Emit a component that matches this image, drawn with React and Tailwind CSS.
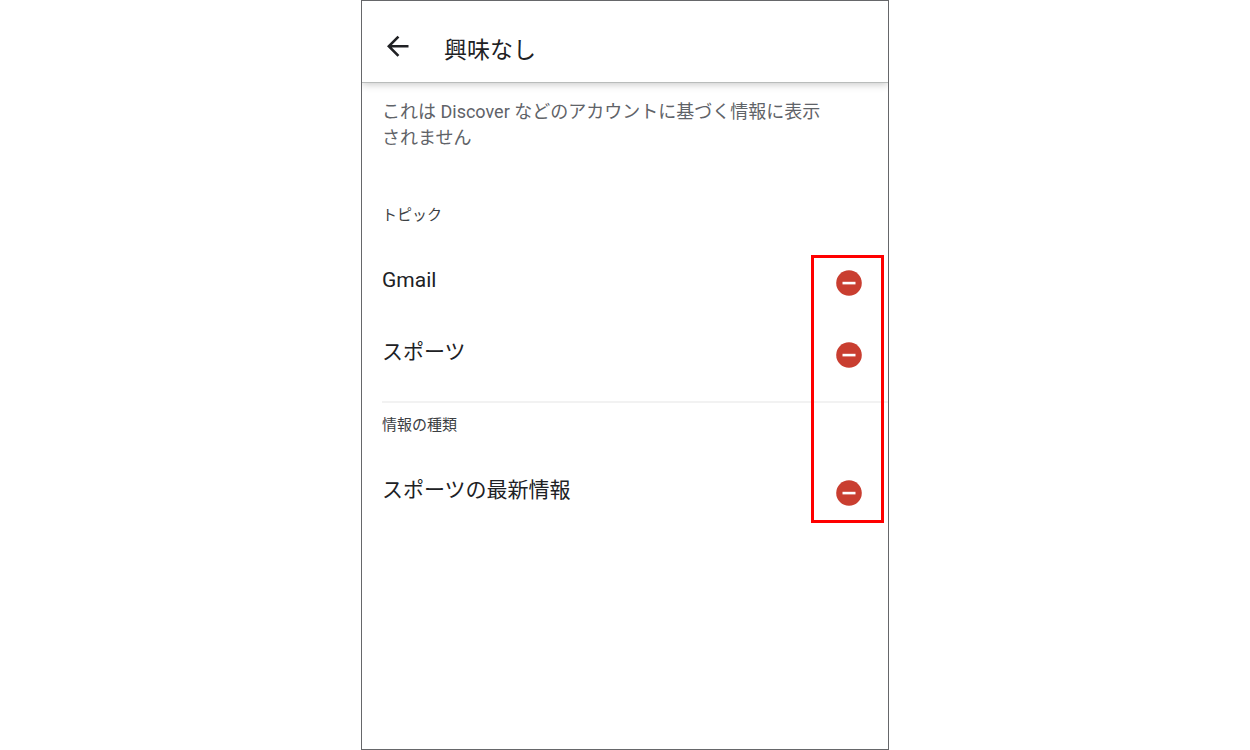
import { useState } from "react";

const SECTIONS = [
  { title: "トピック", items: ["Gmail", "スポーツ"] },
  { title: "情報の種類", items: ["スポーツの最新情報"] },
];

const BackIcon = () => (
  <svg width="30" height="30" viewBox="0 0 24 24" fill="currentColor" aria-hidden="true">
    <path d="M21.2 11.200H7.900l6-6-1.500-1.500L4 12.200l8.400 8.400 1.500-1.500-6-6h13.300z" />
  </svg>
);

const RemoveIcon = () => (
  <svg width="26" height="26" viewBox="0 0 26 26" aria-hidden="true">
    <circle cx="13" cy="13" r="12.8" fill="#c93e30" />
    <path d="M6.500 11.800h13v2.600h-13z" fill="#fff" />
  </svg>
);

const TopicRow = ({ name, onRemove }) => (
  <li className="flex h-18 items-center justify-between pr-[26px]">
    <span className="pb-1.5 text-[21px] leading-7 text-[#202124]">{name}</span>
    <button type="button" aria-label={`${name}を削除`} onClick={() => onRemove(name)} className="cursor-pointer">
      <RemoveIcon />
    </button>
  </li>
);

const App = () => {
  const [removed, setRemoved] = useState([]);

  const handleRemove = (name) => setRemoved((prev) => [...prev, name]);
  const visible = (items) => items.filter((item) => !removed.includes(item));

  const [topics, kinds] = SECTIONS;

  return (
    <div
      lang="ja"
      className="min-h-screen bg-white font-[Roboto,'Noto_Sans_CJK_JP',sans-serif]"
    >
      <div className="mx-auto flex min-h-screen w-full max-w-[528px] flex-col overflow-hidden border border-[#66676a] bg-white">
        <header className="flex h-[82px] items-center gap-8 border-b border-[#b9bcbb] pt-2 pl-5 shadow-[0_1px_8px_rgba(0,0,0,0.24)]">
          <button type="button" aria-label="戻る" className="cursor-pointer text-[#202124]">
            <BackIcon />
          </button>
          <h1 className="pt-2.5 text-[23px] leading-8 text-[#202124]">興味なし</h1>
        </header>

        <main className="pl-5">
          <p className="max-w-[460px] pt-4 pr-5 text-[18px] leading-[26px] text-[#5f6368]">
            これは Discover などのアカウントに基づく情報に表示されません
          </p>

          <h2 className="mt-[54px] text-[15px] leading-5 text-[#3c4043]">{topics.title}</h2>

          <div className="relative mt-[22px]">
            <ul>
              {visible(topics.items).map((item) => (
                <TopicRow key={item} name={item} onRemove={handleRemove} />
              ))}
            </ul>

            <section className="mt-2.5 border-t-2 border-[#f2f2f2] pt-3">
              <h2 className="text-[15px] leading-5 text-[#3c4043]">{kinds.title}</h2>
              <ul className="mt-[22px]">
                {visible(kinds.items).map((item) => (
                  <TopicRow key={item} name={item} onRemove={handleRemove} />
                ))}
              </ul>
            </section>

            {/* highlight around the remove buttons */}
            <div className="pointer-events-none absolute top-2 right-1 bottom-1.5 w-[73px] border-3 border-[#ff0000]" />
          </div>
        </main>
      </div>
    </div>
  );
};

export default App;
